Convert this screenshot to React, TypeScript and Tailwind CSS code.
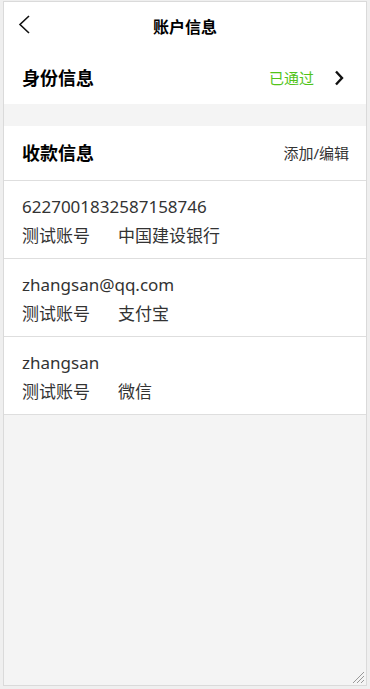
import type { ReactNode } from 'react'

// ── Data ───────────────────────────────────────────────────────────────────
interface Account {
  no: string
  name: string
  channel: string
}

const accounts: Account[] = [
  { no: '6227001832587158746', name: '测试账号', channel: '中国建设银行' },
  { no: 'zhangsan@qq.com', name: '测试账号', channel: '支付宝' },
  { no: 'zhangsan', name: '测试账号', channel: '微信' },
]

// ── Icons ──────────────────────────────────────────────────────────────────
function BackIcon() {
  return (
    <svg width="14" height="20" viewBox="0 0 14 20" fill="none">
      <polyline points="11,2 2,10.5 11,19" stroke="#111" strokeWidth="1.6" />
    </svg>
  )
}

function ArrowRight() {
  return (
    <svg width="10" height="16" viewBox="0 0 10 16" fill="none">
      <polyline points="2,1.5 8,8 2,14.5" stroke="#111" strokeWidth="2.4" />
    </svg>
  )
}

function ResizeGrip() {
  return (
    <svg width="14" height="14" viewBox="0 0 14 14" className="absolute bottom-[1px] right-[1px]">
      <line x1="13" y1="2" x2="2" y2="13" stroke="#999" strokeWidth="1" />
      <line x1="13" y1="6" x2="6" y2="13" stroke="#999" strokeWidth="1" />
      <line x1="13" y1="10" x2="10" y2="13" stroke="#999" strokeWidth="1" />
    </svg>
  )
}

// ── Section header ─────────────────────────────────────────────────────────
function SectionRow({ title, children, className }: { title: string; children: ReactNode; className: string }) {
  return (
    <div className={`flex items-center justify-between bg-white pl-[18px] ${className}`}>
      <span className="text-[18px] font-bold text-black">{title}</span>
      {children}
    </div>
  )
}

// ── Account row ────────────────────────────────────────────────────────────
function AccountRow({ item }: { item: Account }) {
  return (
    <div className="border-b border-[#dedede] bg-white pl-[18px] pt-[15px] pb-[11px] text-[17px] text-[#333]">
      <div className="h-[22px] leading-[22px]">{item.no}</div>
      <div className="mt-[7px] flex h-[22px] leading-[22px]">
        <span className="mr-[28px]">{item.name}</span>
        <span>{item.channel}</span>
      </div>
    </div>
  )
}

// ── App ────────────────────────────────────────────────────────────────────
export default function App() {
  return (
    <div
      className="h-[689px] w-[370px] border-x-[3px] border-t-[1px] border-b-[3px] border-[#efefef]"
      style={{ fontFamily: "'Noto Sans', 'Noto Sans CJK SC', sans-serif" }}
    >
      <div className="relative flex h-full flex-col border border-[#dadada] bg-[#f4f4f4]">
        {/* Nav bar */}
        <div className="relative flex h-[50px] items-center justify-center bg-white">
          <span className="absolute left-[14px] top-[12px]">
            <BackIcon />
          </span>
          <span className="text-[16px] font-bold text-black">账户信息</span>
        </div>

        {/* Identity */}
        <SectionRow title="身份信息" className="h-[52px] pr-[22px]">
          <div className="flex items-center gap-[20px]">
            <span className="text-[15px] text-[#52c41a]">已通过</span>
            <ArrowRight />
          </div>
        </SectionRow>

        <div className="h-[22px]" />

        {/* Payment info */}
        <SectionRow title="收款信息" className="h-[55px] border-b border-[#dedede] pr-[17px]">
          <span className="text-[15px] text-[#333]">添加/编辑</span>
        </SectionRow>

        {accounts.map((a) => (
          <AccountRow key={a.no} item={a} />
        ))}

        <ResizeGrip />
      </div>
    </div>
  )
}
